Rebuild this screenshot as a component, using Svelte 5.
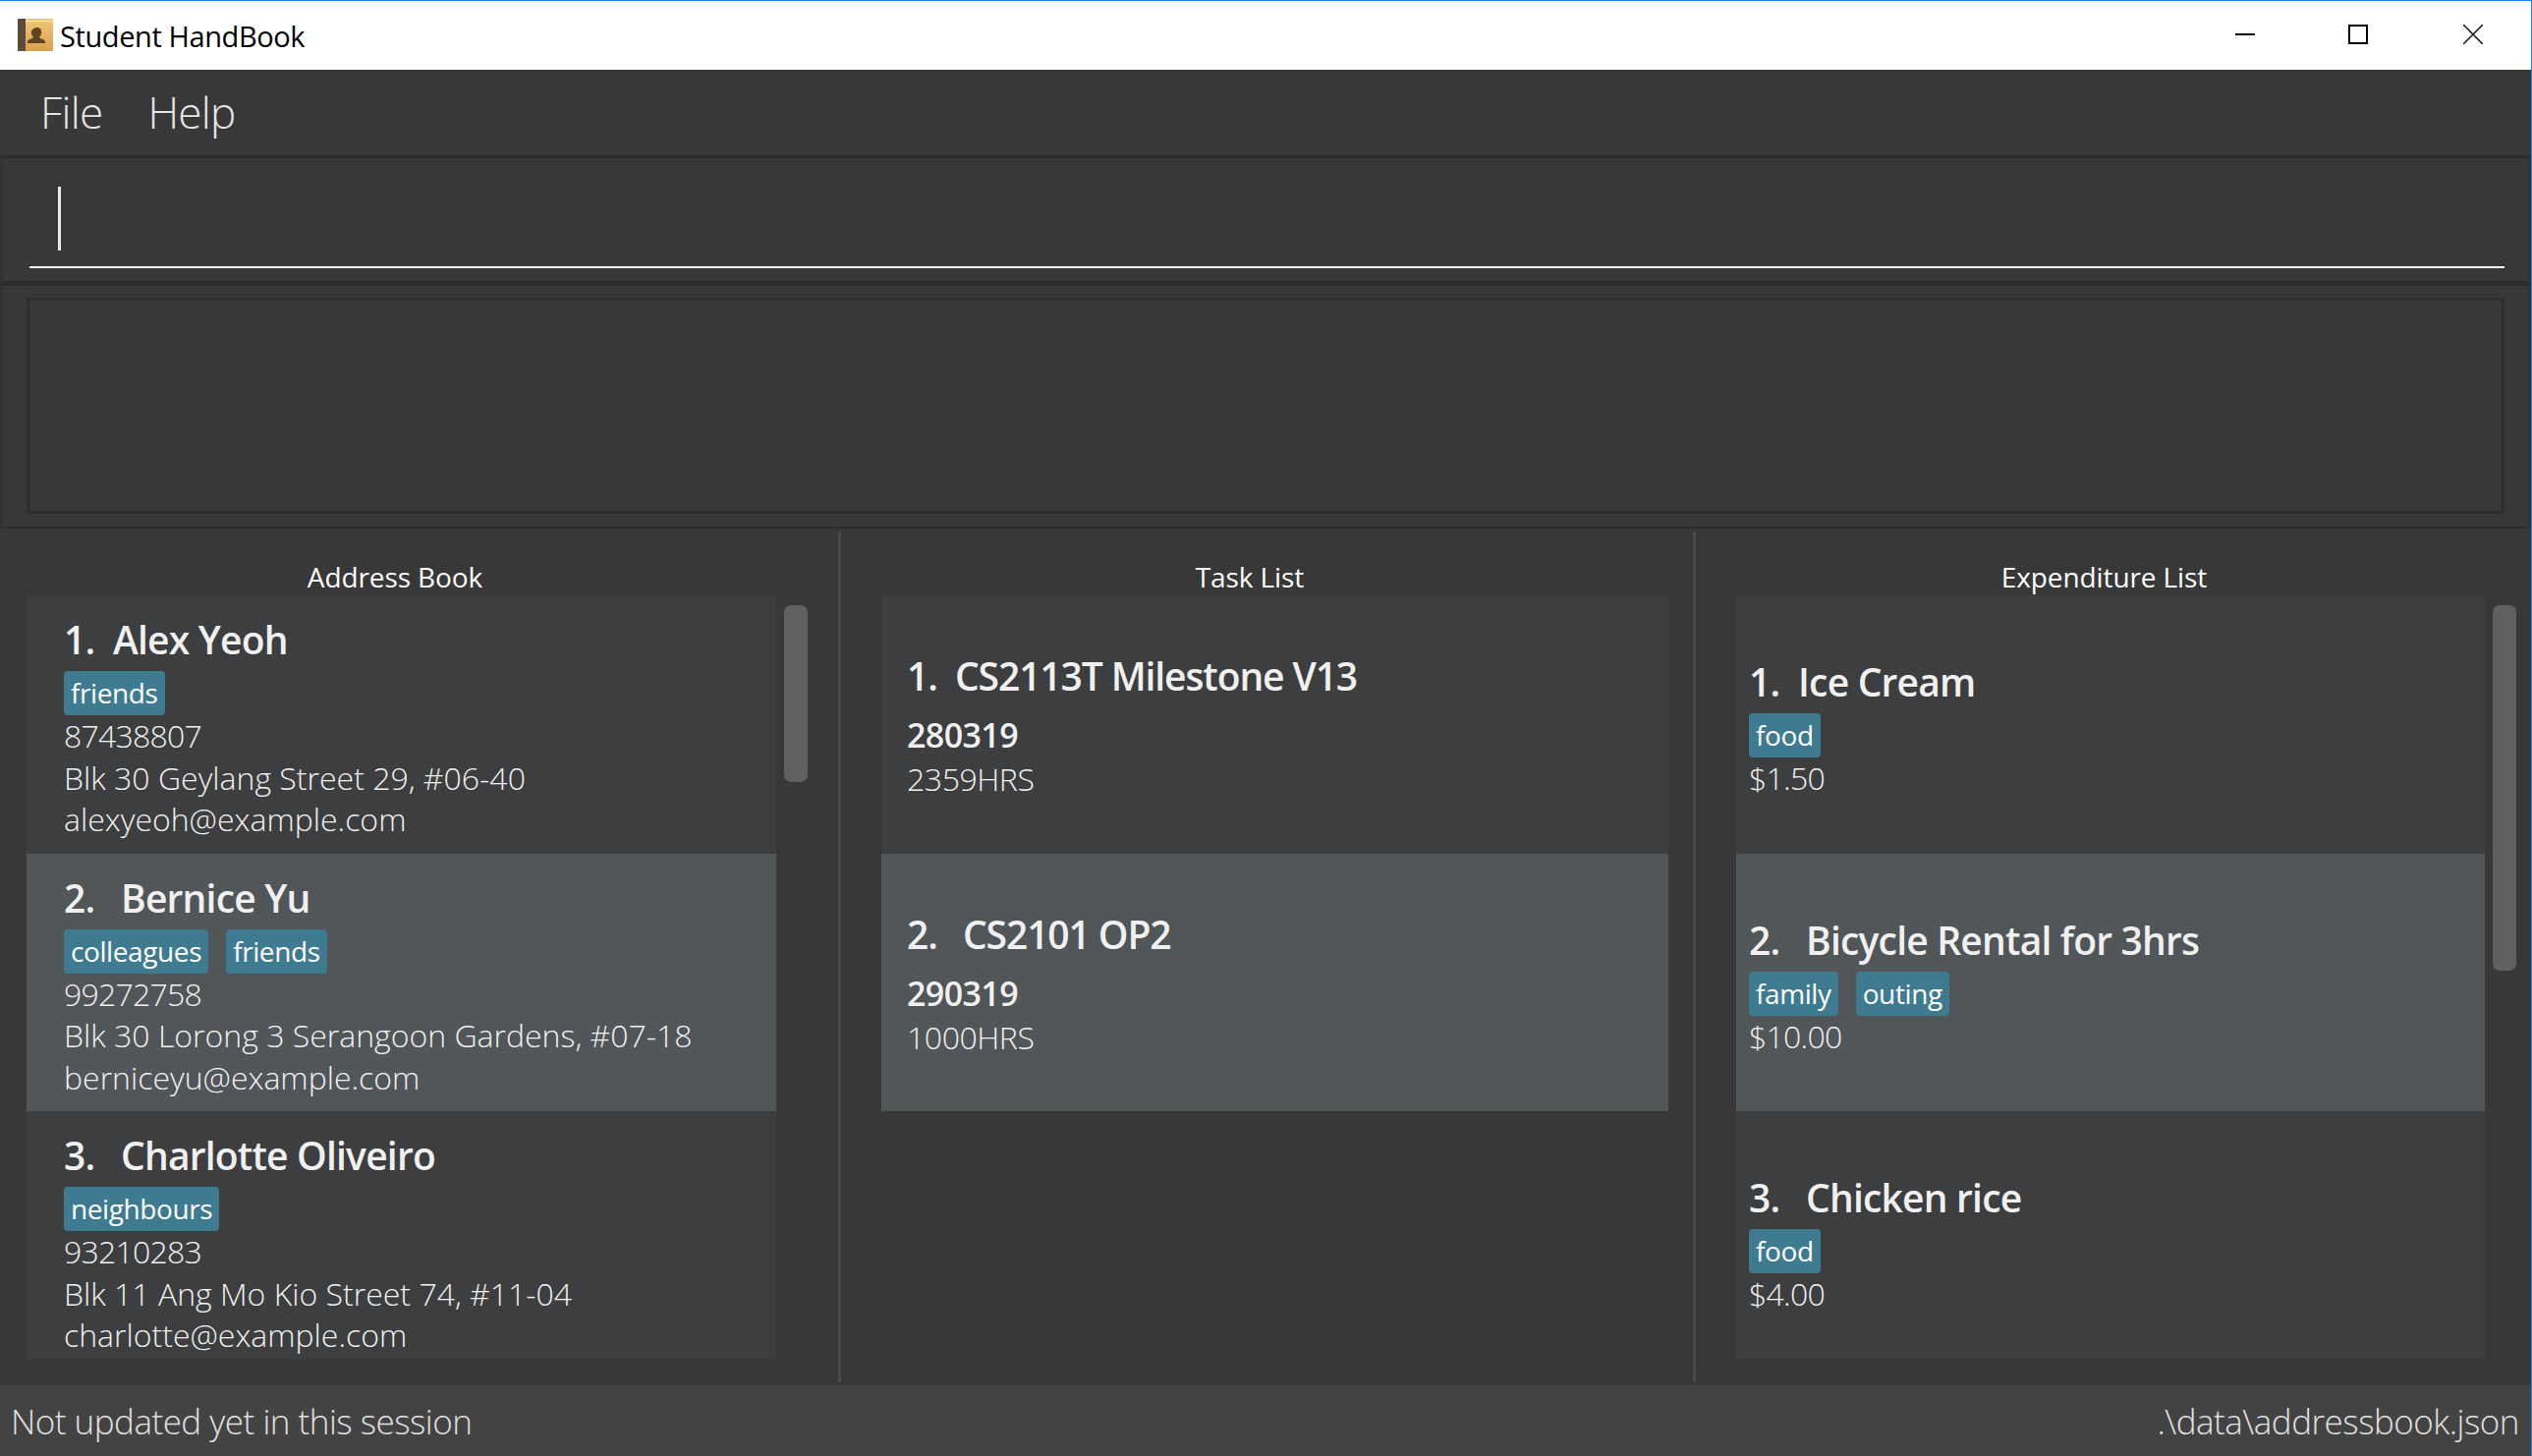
<script>
  // sample data, same shape as the real lists
  let persons = [
    { name: "Alex Yeoh", tags: ["friends"], phone: "87438807", address: "Blk 30 Geylang Street 29, #06-40", email: "alexyeoh@example.com" },
    { name: "Bernice Yu", tags: ["colleagues", "friends"], phone: "99272758", address: "Blk 30 Lorong 3 Serangoon Gardens, #07-18", email: "berniceyu@example.com" },
    { name: "Charlotte Oliveiro", tags: ["neighbours"], phone: "93210283", address: "Blk 11 Ang Mo Kio Street 74, #11-04", email: "charlotte@example.com" }
  ];
  let tasks = [
    { name: "CS2113T Milestone V13", date: "280319", time: "2359HRS" },
    { name: "CS2101 OP2", date: "290319", time: "1000HRS" }
  ];
  let expenses = [
    { name: "Ice Cream", tags: ["food"], price: "$1.50" },
    { name: "Bicycle Rental for 3hrs", tags: ["family", "outing"], price: "$10.00" },
    { name: "Chicken rice", tags: ["food"], price: "$4.00" }
  ];
</script>

<main class="window">
  <header class="titlebar">
    <svg class="appicon" viewBox="0 0 36 34" width="36" height="34">
      <defs>
        <linearGradient id="cover" x1="0" y1="0" x2="0" y2="1">
          <stop offset="0" stop-color="#f0c878" />
          <stop offset="1" stop-color="#d9a04e" />
        </linearGradient>
      </defs>
      <rect x="0" y="0" width="36" height="33" rx="1.5" fill="url(#cover)" />
      <rect x="0" y="0" width="8" height="33" fill="#5c4c3e" />
      <rect x="8" y="2" width="27" height="1" fill="#fbeac4" />
      <path transform="translate(-2 1)" d="M22 8c2.800 0 4.200 2.200 4.200 4.800 0 2-.8 3.600-1.900 4.600v1.400c2.400 1 5.700 1.600 5.700 4.200v1H12v-1c0-2.600 3.300-3.200 5.700-4.200v-1.400c-1.100-1-1.900-2.600-1.900-4.600C15.800 10.200 19.200 8 22 8z" fill="#5f4422" />
    </svg>
    <span class="apptitle">Student HandBook</span>
    <div class="winbtns">
      <svg class="minbtn" viewBox="0 0 20 20" width="20" height="20"><path d="M0 10h20" stroke="#000" stroke-width="2" /></svg>
      <svg viewBox="0 0 20 20" width="20" height="20"><rect x="1" y="1" width="18" height="18" fill="none" stroke="#000" stroke-width="2" /></svg>
      <svg viewBox="0 0 20 20" width="20" height="20"><path d="M0 0l20 20M20 0L0 20" stroke="#111" stroke-width="1.500" /></svg>
    </div>
  </header>

  <nav class="menubar">
    <span>File</span>
    <span>Help</span>
  </nav>

  <section class="commandbox">
    <div class="commandinput"><div class="caret"></div></div>
  </section>

  <section class="resultbox">
    <div class="resultinner"></div>
  </section>

  <section class="panels">
    <div class="col col1">
      <div class="colhead">Address Book</div>
      <div class="listwrap">
        <div class="list">
          {#each persons as p, i}
            <div class="card person" class:selected={i == 1}>
              <div class="name"><span class="num" class:first={i == 0}>{i + 1}.</span>{p.name}</div>
              <div class="tags">
                {#each p.tags as t}<span class="tag">{t}</span>{/each}
              </div>
              <div class="line digits">{p.phone}</div>
              <div class="line">{p.address}</div>
              <div class="line">{p.email}</div>
            </div>
          {/each}
        </div>
        <div class="scrolltrack"><div class="thumb thumb1"></div></div>
      </div>
    </div>

    <div class="col col2">
      <div class="colhead">Task List</div>
      <div class="listwrap">
        <div class="list">
          {#each tasks as t, i}
            <div class="card task" class:selected={i == 1}>
              <div class="name"><span class="num" class:first={i == 0}>{i + 1}.</span>{t.name}</div>
              <div class="date">{t.date}</div>
              <div class="line time">{t.time}</div>
            </div>
          {/each}
        </div>
      </div>
    </div>

    <div class="col col3">
      <div class="colhead">Expenditure List</div>
      <div class="listwrap">
        <div class="list">
          {#each expenses as e, i}
            <div class="card expense" class:selected={i == 1}>
              <div class="name"><span class="num" class:first={i == 0}>{i + 1}.</span>{e.name}</div>
              <div class="tags">
                {#each e.tags as t}<span class="tag">{t}</span>{/each}
              </div>
              <div class="line digits">{e.price}</div>
            </div>
          {/each}
        </div>
        <div class="scrolltrack"><div class="thumb thumb3"></div></div>
      </div>
    </div>
  </section>

  <footer class="statusbar">
    <span>Not updated yet in this session</span>
    <span>.\data\addressbook.json</span>
  </footer>
</main>

<style>
:global(body) {
  margin: 0;
  background: #383838;
}

.window {
  box-sizing: border-box;
  width: 2577px;
  height: 1482px;
  display: flex;
  flex-direction: column;
  overflow: hidden;
  border-top: 1px solid #1a88e0;
  border-right: 1px solid #1a88e0;
  background: #383838;
  color: #fff;
  font-family: "Open Sans", "Noto Sans", sans-serif;
}

.titlebar {
  height: 70px;
  flex: none;
  display: flex;
  align-items: center;
  background: #fff;
  color: #000;
  padding-left: 18px;
}

.apptitle {
  margin-left: 7px;
  font-size: 29px;
  letter-spacing: -0.4px;
}

.winbtns {
  margin-left: auto;
  display: flex;
  gap: 97px;
  padding-right: 49px;
  margin-top: -2px;
}

.minbtn {
  margin-right: -2px;
}

.menubar {
  height: 87px;
  flex: none;
  box-sizing: border-box;
  display: flex;
  align-items: center;
  gap: 46px;
  padding: 0 0 2px 41px;
  font-size: 44px;
  font-weight: 300;
  color: #e6e6e6;
  letter-spacing: -0.7px;
}

.commandbox {
  height: 133px;
  flex: none;
  box-sizing: border-box;
  border-style: solid;
  border-color: #2c2c2c #333 #2c2c2c #333;
  border-width: 3px 3px 5px 3px;
  padding: 0 24px 0 27px;
}

.commandinput {
  height: 112px;
  box-sizing: border-box;
  border-bottom: 2px solid #f4f4f4;
  padding: 29px 0 0 29px;
}

.caret {
  width: 3px;
  height: 65px;
  background: #e8e8e8;
}

.resultbox {
  height: 247px;
  flex: none;
  box-sizing: border-box;
  border-style: solid;
  border-color: #2c2c2c #333;
  border-width: 0 3px 2px 3px;
  padding: 12px 24px 13px 24px;
}

.resultinner {
  height: 100%;
  box-sizing: border-box;
  border: 3px solid #2e2e2e;
}

.panels {
  flex: 1;
  display: flex;
  min-height: 0;
  padding-top: 3px;
  padding-bottom: 3px;
}

.col {
  display: flex;
  flex-direction: column;
  min-width: 0;
  box-sizing: border-box;
}

.col1 {
  width: 856px;
  border-right: 3px solid #4a4a4a;
  padding-left: 27px;
}

.col2 {
  width: 870px;
  border-right: 3px solid #4a4a4a;
  padding-left: 41px;
}

.col3 {
  flex: 1;
  padding-left: 41px;
}

.colhead {
  height: 65px;
  flex: none;
  box-sizing: border-box;
  padding-top: 27px;
  text-align: center;
  font-size: 28px;
  line-height: 38px;
  letter-spacing: -0.1px;
}

.col1 .colhead { width: 750px; }
.col2 .colhead { width: 750px; }
.col3 .colhead { width: 749px; }

.listwrap {
  flex: none;
  height: 777px;
  display: flex;
  overflow: hidden;
}

.list {
  width: 763px;
  flex: none;
  background: #3c3e3f;
  overflow: hidden;
}

.col2 .list {
  width: 801px;
  background: transparent;
}

.col3 .list {
  width: 762px;
}

.scrolltrack {
  flex: none;
  padding: 10px 0 0 8px;
}

.thumb {
  width: 24px;
  border-radius: 7px;
  background: #606060;
}

.thumb1 { height: 180px; }
.thumb3 { height: 372px; }

.card {
  height: 262.500px;
  box-sizing: border-box;
  background: #3c3e3f;
  overflow: hidden;
}

.card.selected {
  background: #515658;
}

.name {
  display: flex;
  font-size: 39px;
  line-height: 52px;
  font-weight: 600;
  color: #f0f0f0;
  white-space: nowrap;
  letter-spacing: -0.8px;
}

.task .name {
  letter-spacing: -1.1px;
}

.num {
  width: 58px;
  flex: none;
}

.num.first {
  width: 50px;
}

.task .num {
  width: 57px;
}

.task .num.first {
  width: 49px;
}

.line {
  font-size: 32px;
  line-height: 42.700px;
  font-weight: 300;
  color: #f0f0f0;
  white-space: nowrap;
  letter-spacing: 0;
}

.line.digits {
  letter-spacing: -0.75px;
}

.line.time {
  margin-top: 2px;
  letter-spacing: -0.45px;
}

.tags {
  display: flex;
  gap: 18px;
  margin-top: 6px;
}

.tag {
  height: 45px;
  box-sizing: border-box;
  padding: 0 7px;
  border-radius: 4px;
  background: #3e7b91;
  font-size: 28px;
  line-height: 44px;
  letter-spacing: -0.4px;
}

.person {
  padding: 19px 0 0 38px;
}

.task {
  padding: 56px 0 0 26px;
}

.expense {
  padding: 62px 0 0 13px;
}

.date {
  margin-top: 12px;
  font-size: 34px;
  line-height: 44px;
  font-weight: 600;
  color: #f0f0f0;
  letter-spacing: -0.6px;
}

.statusbar {
  height: 72px;
  flex: none;
  display: flex;
  justify-content: space-between;
  align-items: center;
  padding: 0 12px 0 11px;
  background: #434343;
  font-size: 35px;
  font-weight: 300;
  color: #e0e0e0;
  letter-spacing: -0.5px;
}
</style>
